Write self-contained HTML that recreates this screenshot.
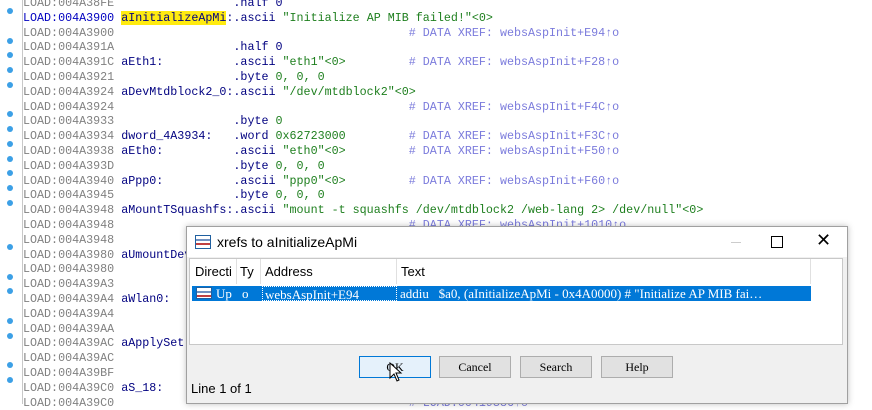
<!DOCTYPE html>
<html><head><meta charset="utf-8"><style>
body{margin:0;width:872px;height:404px;overflow:hidden;background:#fff;position:relative;font-family:"Liberation Mono",monospace;}
#code{position:absolute;left:23px;top:-4px;font-size:11.7px;line-height:14.8px;white-space:pre;color:#000080;}
.a{color:#808080}.g{color:#1e7f1e}.c{color:#7b7bdc}.h{background:#ffeb10}
#gut{position:absolute;left:22px;top:0;width:1px;height:404px;background:#c8c8c8}
.dot{position:absolute;left:7px;width:6px;height:6px;border-radius:3px;background:#3ca0e6}
#dlg{position:absolute;left:186px;top:226px;width:660px;height:176px;background:#f0f0f0;border:1px solid #a0a0a0;box-shadow:0 0 6px rgba(0,0,0,.25);font-family:"Liberation Sans",sans-serif;}
#tb{height:30px;background:#fff;position:relative;font-size:14px}
#tb .t{position:absolute;left:30px;top:7px}
.ico{position:absolute;width:14px;height:12px;border:1px solid #2060a0;background:linear-gradient(#fff 0 3px,#7090c0 3px 5px,#fff 5px 7px,#c04040 7px 9px,#fff 9px)}
#list{position:absolute;left:2px;top:31px;width:652px;height:85px;background:#fff;border:1px solid #c8c8c8;font-size:13px}
.hd{position:absolute;top:0;height:25px;line-height:25px;border-right:1px solid #e0e0e0;padding-left:5px;box-sizing:border-box;color:#000;overflow:hidden;white-space:nowrap}
#sel{position:absolute;left:2px;top:27px;width:619px;height:15px;background:#0078d7;color:#fff;font-family:"Liberation Serif",serif;font-size:13px;line-height:15px}
.btn{position:absolute;top:129px;height:20px;width:70px;background:#e1e1e1;border:1px solid #adadad;font-family:"Liberation Serif",serif;font-size:12px;text-align:center;line-height:20px}
</style></head><body>
<div id="gut"></div>
<div class="dot" style="top:8px"></div><div class="dot" style="top:38px"></div><div class="dot" style="top:52px"></div><div class="dot" style="top:67px"></div><div class="dot" style="top:82px"></div><div class="dot" style="top:111px"></div><div class="dot" style="top:126px"></div><div class="dot" style="top:141px"></div><div class="dot" style="top:156px"></div><div class="dot" style="top:170px"></div><div class="dot" style="top:185px"></div><div class="dot" style="top:200px"></div><div class="dot" style="top:244px"></div><div class="dot" style="top:274px"></div><div class="dot" style="top:288px"></div><div class="dot" style="top:318px"></div><div class="dot" style="top:333px"></div><div class="dot" style="top:362px"></div><div class="dot" style="top:377px"></div>
<div id="code"><span class="a">LOAD:004A38FE</span>                 .half 0
<span style="color:#0000c0">LOAD:004A3900</span> <span class="h">aInitializeApMi</span>:.ascii <span class="g">"Initialize AP MIB failed!"&lt;0&gt;</span>
<span class="a">LOAD:004A3900</span>                                          <span class="c"># DATA XREF: websAspInit+E94↑o</span>
<span class="a">LOAD:004A391A</span>                 .half 0
<span class="a">LOAD:004A391C</span> aEth1:          .ascii <span class="g">"eth1"&lt;0&gt;</span>         <span class="c"># DATA XREF: websAspInit+F28↑o</span>
<span class="a">LOAD:004A3921</span>                 .byte <span class="g">0, 0, 0</span>
<span class="a">LOAD:004A3924</span> aDevMtdblock2_0:.ascii <span class="g">"/dev/mtdblock2"&lt;0&gt;</span>
<span class="a">LOAD:004A3924</span>                                          <span class="c"># DATA XREF: websAspInit+F4C↑o</span>
<span class="a">LOAD:004A3933</span>                 .byte <span class="g">0</span>
<span class="a">LOAD:004A3934</span> dword_4A3934:   .word <span class="g">0x62723000</span>         <span class="c"># DATA XREF: websAspInit+F3C↑o</span>
<span class="a">LOAD:004A3938</span> aEth0:          .ascii <span class="g">"eth0"&lt;0&gt;</span>         <span class="c"># DATA XREF: websAspInit+F50↑o</span>
<span class="a">LOAD:004A393D</span>                 .byte <span class="g">0, 0, 0</span>
<span class="a">LOAD:004A3940</span> aPpp0:          .ascii <span class="g">"ppp0"&lt;0&gt;</span>         <span class="c"># DATA XREF: websAspInit+F60↑o</span>
<span class="a">LOAD:004A3945</span>                 .byte <span class="g">0, 0, 0</span>
<span class="a">LOAD:004A3948</span> aMountTSquashfs:.ascii <span class="g">"mount -t squashfs /dev/mtdblock2 /web-lang 2&gt; /dev/null"&lt;0&gt;</span>
<span class="a">LOAD:004A3948</span>                                          <span class="c"># DATA XREF: websAspInit+1010↑o</span>
<span class="a">LOAD:004A3948</span>
<span class="a">LOAD:004A3980</span> aUmountDev
<span class="a">LOAD:004A3980</span>
<span class="a">LOAD:004A39A3</span>
<span class="a">LOAD:004A39A4</span> aWlan0:
<span class="a">LOAD:004A39A4</span>
<span class="a">LOAD:004A39AA</span>
<span class="a">LOAD:004A39AC</span> aApplySet
<span class="a">LOAD:004A39AC</span>
<span class="a">LOAD:004A39BF</span>
<span class="a">LOAD:004A39C0</span> aS_18:
<span class="a">LOAD:004A39C0</span>                                          <span class="c"># LOAD:00419386↑o</span></div>
<div id="dlg">
 <div id="tb"><div class="ico" style="left:8px;top:8px"></div><span class="t">xrefs to aInitializeApMi</span>
  <div style="position:absolute;left:544px;top:15px;width:10px;height:1px;background:#ccc"></div>
  <div style="position:absolute;left:584px;top:9px;width:10px;height:10px;border:1px solid #000"></div>
  <div style="position:absolute;left:629px;top:3px;font-size:18px">✕</div>
 </div>
 <div id="list">
  <div class="hd" style="left:0;width:47px">Directi</div>
  <div class="hd" style="left:47px;width:24px;padding-left:3px">Ty</div>
  <div class="hd" style="left:71px;width:136px;padding-left:4px">Address</div>
  <div class="hd" style="left:207px;width:414px;padding-left:4px">Text</div>
  <div id="sel"><div class="ico" style="left:4px;top:1px;height:10px"></div>
   <span style="position:absolute;left:24px">Up</span><span style="position:absolute;left:50px">o</span>
   <span style="position:absolute;left:70px;width:135px;border:1px dotted #fff;box-sizing:border-box;height:15px;padding-left:2px">websAspInit+E94</span>
   <span style="position:absolute;left:208px;white-space:pre">addiu   $a0, (aInitializeApMi - 0x4A0000) # "Initialize AP MIB fai…</span></div>
 </div>
 <div class="btn" style="left:172px;background:#e5f1fb;border-color:#0078d7">OK</div>
 <div class="btn" style="left:252px">Cancel</div>
 <div class="btn" style="left:333px">Search</div>
 <div class="btn" style="left:414px">Help</div>
 <svg style="position:absolute;left:202px;top:135px" width="14" height="20" viewBox="0 0 14 20"><path d="M1 1 L1 16 L5 12 L8 19 L10 18 L7 11 L12 11 Z" fill="#fff" stroke="#000" stroke-width="1"/></svg>
 <div style="position:absolute;left:4px;top:154px;font-size:13px">Line 1 of 1</div>
</div>
</body></html>
